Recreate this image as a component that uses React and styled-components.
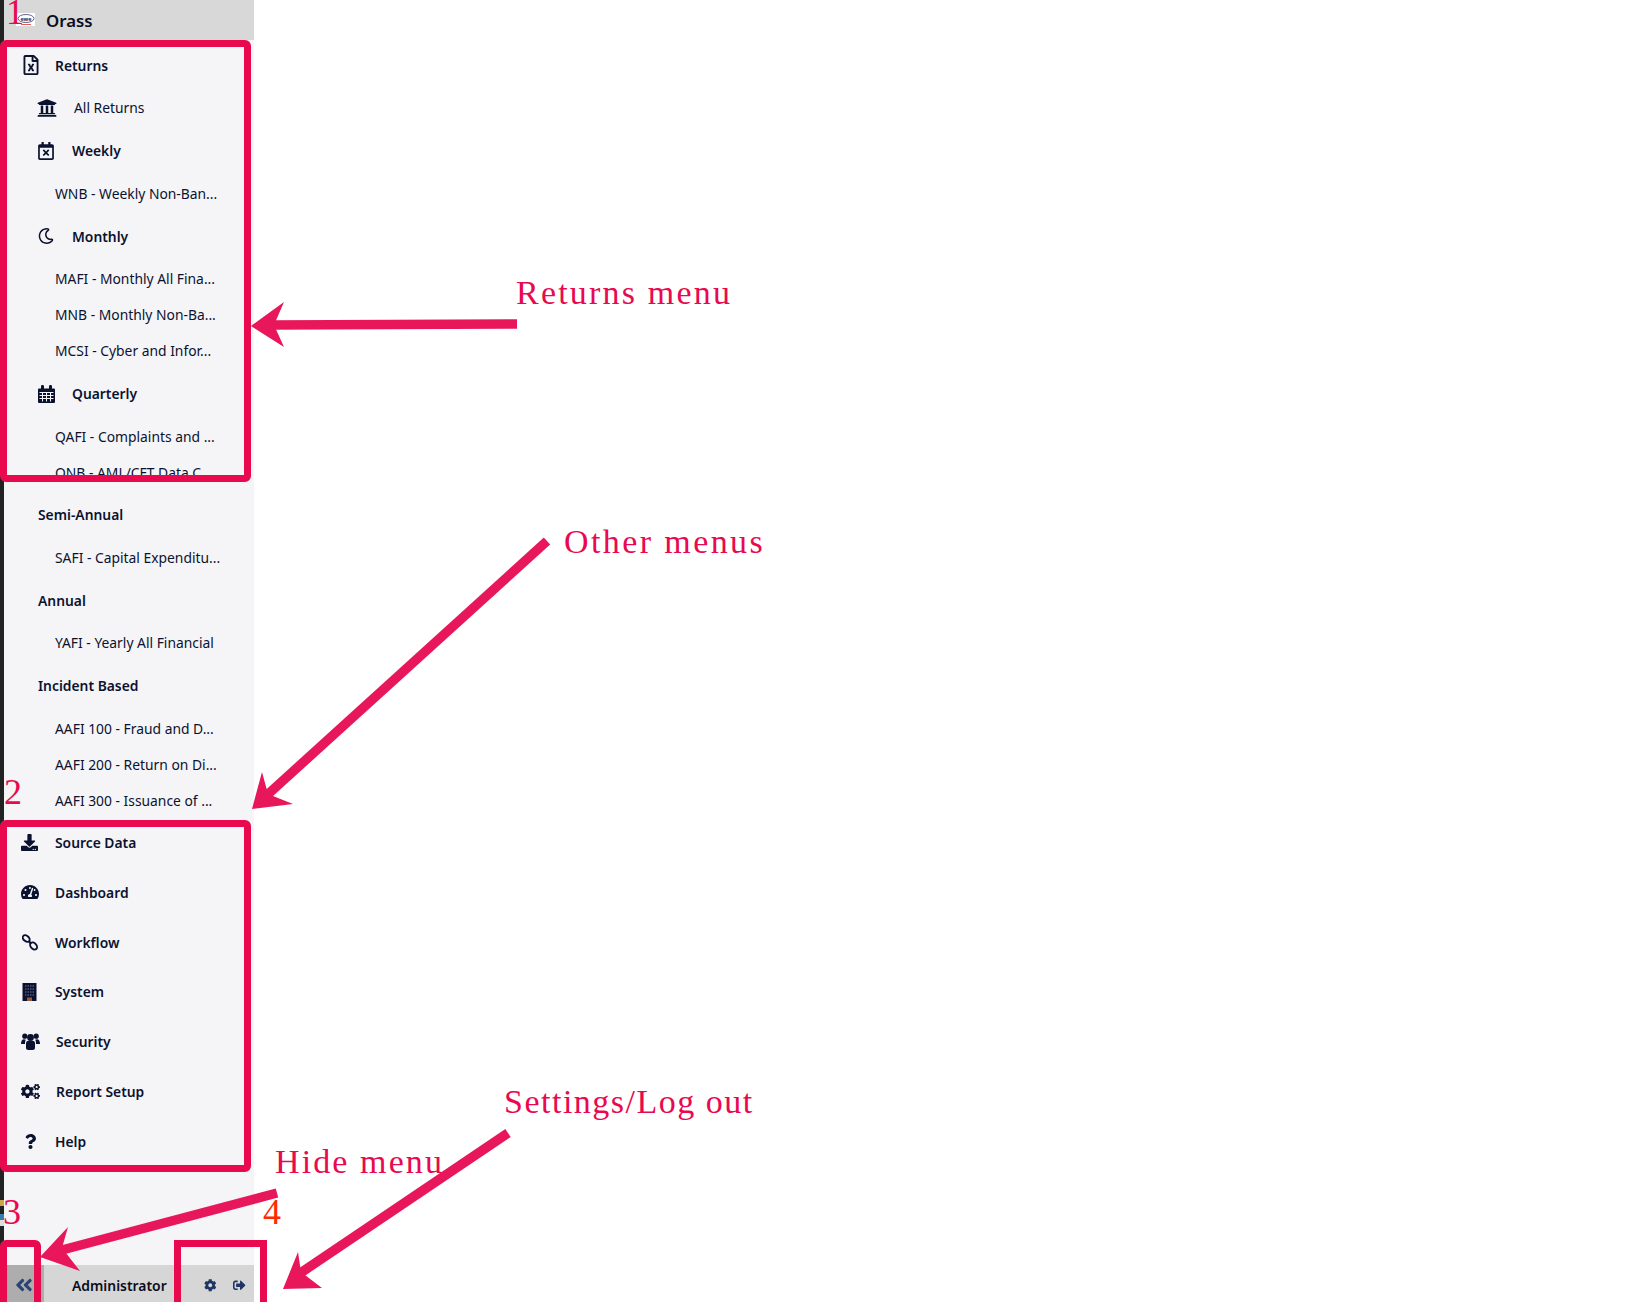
import styled, { createGlobalStyle } from "styled-components"
import {
  FaRegFileExcel, FaUniversity, FaRegCalendarTimes, FaRegMoon,
  FaDownload, FaTachometerAlt, FaCogs, FaQuestion,
  FaAngleDoubleLeft, FaCog, FaSignOutAlt,
} from "react-icons/fa"

const GlobalStyle = createGlobalStyle`
  html, body {
    margin: 0;
    padding: 0;
    background: #fff;
  }
`

const INK = "#0b1230"
const PINK = "#e8094f"
const ARROW = "#e8175b"

const Page = styled.div`
  width: 1630px;
  height: 1302px;
  position: relative;
  overflow: hidden;
  display: flex;
  background: #fff;
  font-family: "Noto Sans", "Open Sans", sans-serif;
  color: ${INK};
`

const DesktopEdge = styled.div`
  width: 4px;
  height: 100%;
  flex: none;
  background:
    linear-gradient(#222 0 1200px, #c9a74a 1200px 1206px, #222 1206px 1214px, #3a7ab0 1214px 1220px, #ddd 1220px 1226px, #222 1226px);
`

const Sidebar = styled.nav`
  width: 250px;
  height: 100%;
  flex: none;
  display: flex;
  flex-direction: column;
  background: #f5f5f7;
`

const Header = styled.header`
  height: 40px;
  flex: none;
  display: flex;
  align-items: center;
  background: #d8d8d8;
  padding-left: 12px;
`

const Logo = styled.svg`
  width: 19px;
  height: 13px;
  flex: none;
  margin-top: -1px;
`

const Brand = styled.span`
  margin-left: 11px;
  margin-top: 1px;
  font-size: 16.8px;
  font-weight: 600;
  color: #0a0d1c;
`

const MenuList = styled.div`
  display: block;
  padding-top: 0.6px;
  margin-bottom: -0.6px;
`

const Row = styled.div`
  height: 36px;
  display: flex;
  align-items: center;
  font-size: 13.85px;
  font-weight: ${(p) => (p.$bold ? 600 : 400)};
  padding-left: ${(p) => p.$indent || 0}px;
  margin: ${(p) => (p.$heading ? "6.7px 0" : "0")};
  white-space: nowrap;
`

const RowIcon = styled.span`
  width: ${(p) => p.$width}px;
  flex: none;
  box-sizing: border-box;
  display: flex;
  align-items: center;
  padding-left: ${(p) => p.$inset || 0}px;
  font-size: ${(p) => p.$size || 16}px;
  color: ${INK};
`

const BottomList = styled.div`
  display: flex;
  flex-direction: column;
`

const BottomRow = styled.div`
  height: 49.8px;
  display: flex;
  align-items: center;
  padding-left: 17px;
  font-size: 13.85px;
  font-weight: 600;
  white-space: nowrap;
`

const Spacer = styled.div`
  flex: 1;
`

const Footer = styled.footer`
  height: 37px;
  flex: none;
  display: flex;
  align-items: center;
  background: #d6d6d6;
`

const CollapseButton = styled.div`
  width: 40px;
  height: 100%;
  flex: none;
  display: flex;
  align-items: center;
  justify-content: center;
  padding-top: 3px;
  box-sizing: border-box;
  background: #adadad;
  color: #2a4474;
  font-size: 20px;
`

const UserName = styled.span`
  margin-left: 28px;
  margin-top: 4px;
  font-size: 13.9px;
  font-weight: 600;
  color: #0a0d1c;
`

const FooterIcons = styled.div`
  margin-left: 37px;
  margin-top: 4px;
  display: flex;
  align-items: center;
  gap: 17px;
  font-size: 12.5px;
  color: #1f3563;
`

const Overlay = styled.div`
  position: absolute;
  inset: 0;
  pointer-events: none;
`

const ArrowLayer = styled.svg`
  position: absolute;
  left: 0;
  top: 0;
  width: 1630px;
  height: 1302px;
`

const Frame = styled.div`
  position: absolute;
  box-sizing: border-box;
  left: ${(p) => p.$left}px;
  top: ${(p) => p.$top}px;
  width: ${(p) => p.$width}px;
  height: ${(p) => p.$height}px;
  border: 7.5px solid ${PINK};
  border-radius: ${(p) => p.$radius ?? 6}px;
`

const Caption = styled.span`
  position: absolute;
  left: ${(p) => p.$left}px;
  top: ${(p) => p.$top}px;
  font-family: "Liberation Serif", serif;
  font-size: 34px;
  line-height: 1;
  letter-spacing: ${(p) => p.$spacing}px;
  color: ${PINK};
  white-space: nowrap;
`

const Digit = styled.span`
  position: absolute;
  left: ${(p) => p.$left}px;
  top: ${(p) => p.$top}px;
  width: 16px;
  font-family: "Liberation Serif", serif;
  font-size: 36px;
  line-height: 24px;
  color: ${(p) => p.$color || PINK};
`

const CalendarGridIcon = () => (
  <svg width="17" height="19" viewBox="0 0 17 19">
    <path d="M1 4.5h15a1 1 0 0 1 1 1V18a1 1 0 0 1-1 1H1a1 1 0 0 1-1-1V5.500a1 1 0 0 1 1-1z" fill={INK} />
    <rect x="3" y="1" width="3" height="5" rx="1.200" fill={INK} />
    <rect x="11" y="1" width="3" height="5" rx="1.200" fill={INK} />
    <path d="M1.500 8.500h14M1.500 11.500h14M1.500 14.500h14M4.500 8v9.500M8.500 8v9.500M12.500 8v9.500" stroke="#f5f5f7" strokeWidth="1" fill="none" />
  </svg>
)

const ChainIcon = () => (
  <svg width="16" height="17" viewBox="0 0 16 17">
    <g fill="none" stroke={INK} strokeWidth="1.900">
      <ellipse cx="4.200" cy="4.500" rx="3.900" ry="2.700" transform="rotate(40 4.200 4.500)" />
      <ellipse cx="11.600" cy="12" rx="4" ry="2.900" transform="rotate(48 11.600 12)" />
      <path d="M6.500 7l2.500 2.500" strokeWidth="2.400" />
    </g>
  </svg>
)

const BuildingIcon = () => (
  <svg width="15" height="18" viewBox="0 0 15 18">
    <rect x="0.500" width="14" height="18" fill={INK} />
    <path d="M3 3h9M3 6h9M3 9h9M3 12h9" stroke="#6f7b9e" strokeWidth="1" strokeDasharray="1.500 1" fill="none" />
    <rect x="5" y="14.500" width="5" height="3.500" fill="#9a5a3c" />
  </svg>
)

const GroupIcon = () => (
  <svg width="19" height="17" viewBox="0 0 19 17" fill={INK}>
    <circle cx="3.800" cy="3.200" r="2.600" />
    <circle cx="15.200" cy="3.200" r="2.600" />
    <circle cx="9.500" cy="4.500" r="3.400" />
    <path d="M0 11c0-3 1.200-4.800 3-4.800.8 0 1.300.3 1.800.6-.6 1-.8 2.200-.8 4.200H0z" />
    <path d="M19 11c0-3-1.200-4.800-3-4.800-.8 0-1.300.3-1.800.6.600 1 .8 2.200.8 4.200h4z" />
    <path d="M5 10.500c0-1.800 1-2.800 2.300-2.800h4.400c1.300 0 2.300 1 2.300 2.800V15c0 1-1 2-2.200 2H7.200C6 17 5 16 5 15z" />
  </svg>
)

const arrows = [
  { line: [517, 324, 272, 325], head: "251,326 284,302 274,325 284,347" },
  { line: [547, 541, 266, 796], head: "252,809 262,772 268,794 293,804" },
  { line: [277, 1193, 62, 1250], head: "40,1257 68,1227 62,1248 80,1271" },
  { line: [508, 1133, 299, 1274], head: "283,1289 298,1252 301,1272 322,1288" },
]

const returnsMenu = [
  { label: "Returns", heading: true, bold: true, indent: 17, icon: <FaRegFileExcel />, iconWidth: 34, size: 20 },
  { label: "All Returns", heading: true, indent: 33, icon: <FaUniversity />, iconWidth: 37, size: 20 },
  { label: "Weekly", heading: true, bold: true, indent: 33, icon: <FaRegCalendarTimes />, iconWidth: 35, size: 18 },
  { label: "WNB - Weekly Non-Ban...", indent: 51 },
  { label: "Monthly", heading: true, bold: true, indent: 34, icon: <FaRegMoon />, iconWidth: 34, size: 16 },
  { label: "MAFI - Monthly All Fina...", indent: 51 },
  { label: "MNB - Monthly Non-Ba...", indent: 51 },
  { label: "MCSI - Cyber and Infor...", indent: 51 },
  { label: "Quarterly", heading: true, bold: true, indent: 34, icon: <CalendarGridIcon />, iconWidth: 34 },
  { label: "QAFI - Complaints and ...", indent: 51 },
  { label: "QNB - AML/CFT Data C...", indent: 51 },
  { label: "Semi-Annual", heading: true, bold: true, indent: 34 },
  { label: "SAFI - Capital Expenditu...", indent: 51 },
  { label: "Annual", heading: true, bold: true, indent: 34 },
  { label: "YAFI - Yearly All Financial", indent: 51 },
  { label: "Incident Based", heading: true, bold: true, indent: 34 },
  { label: "AAFI 100 - Fraud and D...", indent: 51 },
  { label: "AAFI 200 - Return on Di...", indent: 51 },
  { label: "AAFI 300 - Issuance of ...", indent: 51 },
]

const otherMenus = [
  { label: "Source Data", icon: <FaDownload />, width: 34, size: 17 },
  { label: "Dashboard", icon: <FaTachometerAlt />, width: 34, size: 18 },
  { label: "Workflow", icon: <ChainIcon />, width: 34, inset: 1 },
  { label: "System", icon: <BuildingIcon />, width: 34, inset: 1 },
  { label: "Security", icon: <GroupIcon />, width: 35 },
  { label: "Report Setup", icon: <FaCogs />, width: 35, size: 19 },
  { label: "Help", icon: <FaQuestion />, width: 34, size: 15, inset: 2 },
]

const App = () => {
  return (
    <Page>
      <GlobalStyle />
      <DesktopEdge />
      <Sidebar>
        <Header>
          <Logo viewBox="0 0 19 13">
            <rect width="19" height="13" fill="#fff" />
            <ellipse cx="10" cy="5.500" rx="8" ry="4" fill="none" stroke="#222a55" strokeWidth="0.700" />
            <text x="10" y="7.500" fontSize="5.500" fontWeight="700" textAnchor="middle" fill="#222a55" fontFamily="Noto Sans, sans-serif">ewe</text>
            <rect x="5" y="11" width="10" height="0.800" fill="#d33" />
          </Logo>
          <Brand>Orass</Brand>
        </Header>
        <MenuList>
          {returnsMenu.map((item) => (
            <Row key={item.label} $heading={item.heading} $bold={item.bold} $indent={item.indent}>
              {item.icon && <RowIcon $width={item.iconWidth} $size={item.size}>{item.icon}</RowIcon>}
              {item.label}
            </Row>
          ))}
        </MenuList>
        <BottomList>
          {otherMenus.map((item) => (
            <BottomRow key={item.label}>
              <RowIcon $width={item.width} $size={item.size} $inset={item.inset}>{item.icon}</RowIcon>
              {item.label}
            </BottomRow>
          ))}
        </BottomList>
        <Spacer />
        <Footer>
          <CollapseButton><FaAngleDoubleLeft /></CollapseButton>
          <UserName>Administrator</UserName>
          <FooterIcons>
            <FaCog />
            <FaSignOutAlt />
          </FooterIcons>
        </Footer>
      </Sidebar>

      <Overlay>
        <Frame $left={0} $top={40} $width={250.5} $height={441.5} />
        <Frame $left={0} $top={820} $width={250.5} $height={351.5} />
        <Frame $left={0} $top={1240} $width={41} $height={90} />
        <Frame $left={174} $top={1240} $width={93} $height={90} $radius={0} />
        <ArrowLayer viewBox="0 0 1630 1302">
          {arrows.map((a) => (
            <g key={a.head} fill={ARROW} stroke={ARROW}>
              <line x1={a.line[0]} y1={a.line[1]} x2={a.line[2]} y2={a.line[3]} strokeWidth="9.500" />
              <polygon points={a.head} strokeWidth="0" />
            </g>
          ))}
        </ArrowLayer>
        <Caption $left={516} $top={276} $spacing={2.2}>Returns menu</Caption>
        <Caption $left={564} $top={525} $spacing={2.4}>Other menus</Caption>
        <Caption $left={504} $top={1085} $spacing={1.5}>Settings/Log out</Caption>
        <Caption $left={275} $top={1145} $spacing={2.1}>Hide menu</Caption>
        <Digit $left={6} $top={0}>1</Digit>
        <Digit $left={4} $top={780}>2</Digit>
        <Digit $left={3} $top={1200}>3</Digit>
        <Digit $left={263} $top={1200} $color="#ff2a00">4</Digit>
      </Overlay>
    </Page>
  )
}

export default App
